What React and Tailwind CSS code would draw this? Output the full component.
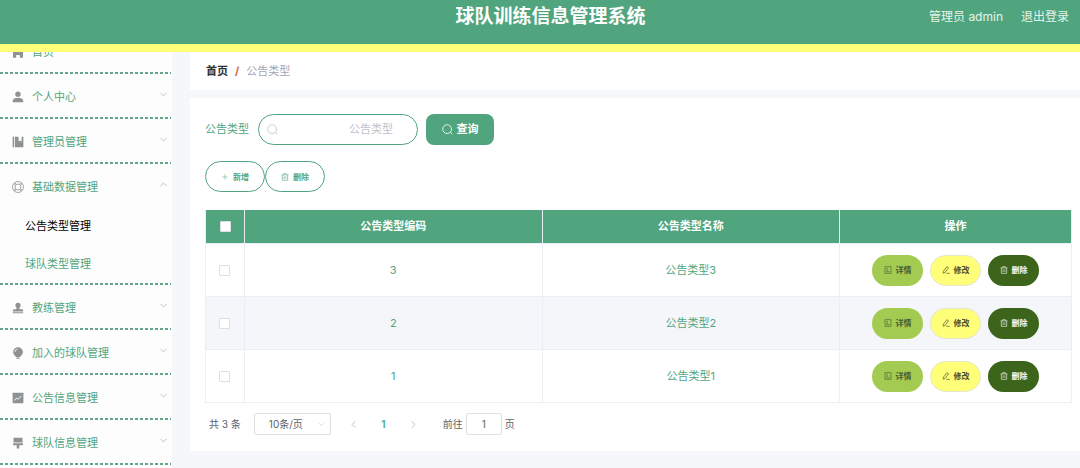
import { useState } from "react";
import { ChevronDown, ChevronLeft, ChevronRight, ChevronUp, Plus } from "lucide-react";

const HomeIcon = () => (
  <svg viewBox="0 0 12 12" className="size-3" fill="currentColor">
    <path d="M6 .6 11.600 5l-.5.8H11v6H7.800V9H4.200v2.800H1v-6H.9L.4 5z" />
  </svg>
);

const UserIcon = () => (
  <svg viewBox="0 0 12 12" className="size-3" fill="currentColor">
    <circle cx="6" cy="3.3" r="2.7" />
    <path d="M.6 11.2c0-2.8 1.6-4.2 3.6-4.2h3.6c2 0 3.6 1.4 3.6 4.200z" />
  </svg>
);

const ManagementIcon = () => (
  <svg viewBox="0 0 12 12" className="size-3" fill="currentColor">
    <path d="M.6.8h1.5v10.400H.6zM2.900.8h3.700v4.800l1.500-1.200 1.500 1.200V.8h1.800v10.400H2.900z" />
  </svg>
);

const HelpIcon = () => (
  <svg viewBox="0 0 12 12" className="size-3" fill="none" stroke="currentColor" strokeWidth=".8">
    <circle cx="6" cy="6" r="5.5" />
    <circle cx="6" cy="6" r="3" />
    <path d="m1.700 2.700 1.800 1.600M2.700 1.700l1.600 1.800M10.300 2.700 8.500 4.300M9.300 1.700 7.700 3.500M1.700 9.300l1.800-1.600M2.700 10.300l1.600-1.800M10.300 9.300 8.500 7.700M9.300 10.300 7.700 8.500" />
  </svg>
);

const StampIcon = () => (
  <svg viewBox="0 0 12 12" className="size-3" fill="currentColor">
    <path d="M6 .7a2.600 2.600 0 0 1 2.600 2.600c0 1.500-1.200 1.800-1.200 3.200 0 .6.4.8 1 .8h1.400c.8 0 1.400.6 1.400 1.400v.7H.8v-.7c0-.8.6-1.400 1.400-1.400h1.400c.6 0 1-.2 1-.8 0-1.400-1.200-1.700-1.200-3.200A2.600 2.600 0 0 1 6 .7zM.8 10.300h10.400v.9H.8z" />
  </svg>
);

const OpportunityIcon = () => (
  <svg viewBox="0 0 12 12" className="size-3" fill="currentColor">
    <path d="M6 .2a4.900 4.900 0 0 1 4.900 4.900c0 2.200-1.600 3.800-3.100 4.900H4.200C2.700 8.900 1.100 7.300 1.100 5.100A4.900 4.900 0 0 1 6 .2zM4.400 10.400h3.200v1.400H4.400z" />
    <path d="M2.900 5A3.100 3.100 0 0 1 5.500 2.100" fill="none" stroke="#fff" strokeWidth=".8" />
  </svg>
);

const MarketingIcon = () => (
  <svg viewBox="0 0 12 12" className="size-3" fill="currentColor">
    <rect x=".6" y=".8" width="10.8" height="10.4" rx=".4" />
    <path d="m2.400 8.500 2.200-2.400 1.700 1.200 2.900-3.400" fill="none" stroke="#fff" strokeWidth=".9" />
  </svg>
);

const PlatformIcon = () => (
  <svg viewBox="0 0 12 12" className="size-3" fill="currentColor">
    <path d="M1.500.8h9v4.800h-9zM1 6.200h10v1.200c0 .5-.4.8-.8.8H7.300v3.200H4.700V8.200H1.800c-.4 0-.8-.3-.8-.8z" />
  </svg>
);

const SearchIcon = () => (
  <svg viewBox="0 0 12 12" className="size-[11px] shrink-0" fill="none" stroke="currentColor" strokeWidth=".9">
    <circle cx="5.600" cy="5.600" r="4.800" />
    <path d="m9.100 9.100 2.100 2.100" />
  </svg>
);

const TrashIcon = () => (
  <svg viewBox="0 0 12 12" className="size-2" fill="none" stroke="currentColor" strokeWidth=".9">
    <path d="M.8 2.800h10.400M4 2.600V1h4v1.600M2 3v8h8V3M4.700 5v4M7.300 5v4" />
  </svg>
);

const DocumentIcon = () => (
  <svg viewBox="0 0 12 12" className="size-2" fill="none" stroke="currentColor" strokeWidth=".9">
    <path d="M1.500 1h9v10h-9zM3.500 4h2.500M3.500 6.200h2.500M3.500 8.500h5" />
  </svg>
);

const EditIcon = () => (
  <svg viewBox="0 0 12 12" className="size-2" fill="none" stroke="currentColor" strokeWidth="1">
    <path d="M7.400 1 9.800 2.700 4.600 9.800 1.700 10.800l.4-3zM6.500 11h5" />
  </svg>
);

const menus = [
  { name: "首页", icon: HomeIcon },
  { name: "个人中心", icon: UserIcon, arrow: true },
  { name: "管理员管理", icon: ManagementIcon, arrow: true },
  { name: "基础数据管理", icon: HelpIcon, arrow: true, children: ["公告类型管理", "球队类型管理"] },
  { name: "教练管理", icon: StampIcon, arrow: true },
  { name: "加入的球队管理", icon: OpportunityIcon, arrow: true },
  { name: "公告信息管理", icon: MarketingIcon, arrow: true },
  { name: "球队信息管理", icon: PlatformIcon, arrow: true },
];

const rows = [
  { code: 3, name: "公告类型3" },
  { code: 2, name: "公告类型2" },
  { code: 1, name: "公告类型1" },
];

function Header() {
  return (
    <header className="relative z-10 h-[52px] shrink-0 border-b-8 border-[#ffff7a] bg-[#50a57e] text-white">
      <div className="grid h-[34px] grid-cols-[1fr_auto_1fr] items-center pl-8 pr-[11px]">
        <h1 className="col-start-2 text-[19px] font-bold">球队训练信息管理系统</h1>
        <div className="flex items-center justify-end gap-[18px] text-xs text-[#e6f4ec]">
          <span>管理员 admin</span>
          <a href="#logout">退出登录</a>
        </div>
      </div>
    </header>
  );
}

function Sidebar() {
  const [opened, setOpened] = useState("基础数据管理");

  return (
    <aside className="w-[172px] shrink-0 overflow-hidden bg-[#fdfdfd]">
      {/* scrolled slightly under the header */}
      <nav className="-mt-[23px] w-[171px]">
        {menus.map(({ name, icon: Icon, arrow, children }) => {
          const isOpen = Boolean(children) && opened === name;
          return (
            <div key={name}>
              <button
                type="button"
                onClick={() => setOpened(isOpen ? "" : name)}
                className="flex h-[43px] w-full items-center pl-3 pr-[2px] pt-[2px] text-left text-[#50a57e]"
              >
                <span className="text-[#8f9295]">
                  <Icon />
                </span>
                <span className="ml-2 flex-1 pt-[2px]">{name}</span>
                {arrow && (isOpen
                  ? <ChevronUp size={11} strokeWidth={1.5} className="mb-1 text-[#a3a6aa]" />
                  : <ChevronDown size={11} strokeWidth={1.5} className="mb-1 text-[#a3a6aa]" />)}
              </button>
              {isOpen && children.map((child, i) => (
                <a
                  key={child}
                  href="#type"
                  className={`flex h-[38px] items-center pl-[25px] ${i === 0 ? "text-black" : "text-[#50a57e]"}`}
                >
                  {child}
                </a>
              ))}
              <div className="h-[2px] bg-[repeating-linear-gradient(to_right,#62a588_0_3px,transparent_3px_5px)]" />
            </div>
          );
        })}
      </nav>
    </aside>
  );
}

function SearchForm() {
  return (
    <form className="flex items-center" onSubmit={(e) => e.preventDefault()}>
      <label htmlFor="typeName" className="mr-[9px] text-[#50a57e]">公告类型</label>
      <div className="mr-2 flex h-[31px] w-40 items-center rounded-full border border-[#50a57e] pl-2 pr-6 text-[#c0c4cc]">
        <SearchIcon />
        <input
          id="typeName"
          placeholder="公告类型"
          className="w-full min-w-0 bg-transparent text-right text-[#50a57e] outline-none placeholder:text-[#bfc2c8]"
        />
      </div>
      <button type="submit" className="flex h-[31px] w-[68px] items-center justify-center gap-1 rounded-lg bg-[#50a57e] font-bold text-white">
        <SearchIcon />
        查询
      </button>
    </form>
  );
}

function TypeTable() {
  const [selected, setSelected] = useState([]);

  const toggle = (code) => {
    setSelected(selected.includes(code) ? selected.filter((c) => c !== code) : [...selected, code]);
  };

  const box = "block size-[11px] appearance-none rounded-[1px] border border-[#dcdfe6] bg-white checked:bg-[#50a57e]";
  const action = "flex h-[31px] w-[51px] items-center justify-center gap-1 rounded-full text-[8px] font-bold";

  return (
    <table className="mt-[18px] w-full table-fixed border-separate border-spacing-0 border-l border-[#ebeef5] text-center text-[#50a57e]">
      <colgroup>
        <col className="w-[39px]" />
        <col />
        <col />
        <col className="w-[232px]" />
      </colgroup>
      <thead>
        <tr className="h-[34px] bg-[#50a57e] text-white *:border-r *:border-b *:border-[#ebeef5]">
          <th>
            <input
              type="checkbox"
              aria-label="全选"
              checked={selected.length === rows.length}
              onChange={(e) => setSelected(e.target.checked ? rows.map((r) => r.code) : [])}
              className={`${box} mx-auto`}
            />
          </th>
          <th>公告类型编码</th>
          <th>公告类型名称</th>
          <th>操作</th>
        </tr>
      </thead>
      <tbody>
        {rows.map((row) => (
          <tr key={row.code} className="h-[53px] even:bg-[#f4f6fa] *:border-r *:border-b *:border-[#ebeef5]">
            <td className="pr-[2px]">
              <input
                type="checkbox"
                aria-label={row.name}
                checked={selected.includes(row.code)}
                onChange={() => toggle(row.code)}
                className={`${box} mx-auto`}
              />
            </td>
            <td>{row.code}</td>
            <td>{row.name}</td>
            <td>
              <div className="flex justify-center gap-[7px]">
                <button type="button" className={`${action} bg-[#a3cb52] text-[#3f5a35]`}><DocumentIcon />详情</button>
                <button type="button" className={`${action} border border-[#e4e7c8] bg-[#ffff7a] text-[#4b4b28]`}><EditIcon />修改</button>
                <button type="button" className={`${action} bg-[#3c641a] text-white`}><TrashIcon />删除</button>
              </div>
            </td>
          </tr>
        ))}
      </tbody>
    </table>
  );
}

function Pagination() {
  return (
    <div className="mt-[10px] flex h-[22px] items-center pl-1 text-[10px] text-[#606266]">
      <span>共 3 条</span>
      <div className="relative ml-[13px]">
        <select aria-label="每页条数" className="h-[22px] w-[77px] appearance-none rounded-xs border border-[#dcdfe6] bg-white pl-[14px] outline-none">
          <option>10条/页</option>
          <option>20条/页</option>
        </select>
        <ChevronDown size={9} strokeWidth={1.5} className="pointer-events-none absolute right-[5px] top-[7px] text-[#c0c4cc]" />
      </div>
      <div className="ml-[15px] flex items-center">
        <button type="button" aria-label="上一页" className="flex w-[15px] justify-center text-[#b4b7be]"><ChevronLeft size={11} strokeWidth={2} /></button>
        <button type="button" className="w-[45px] font-bold text-[#50b58a]">1</button>
        <button type="button" aria-label="下一页" className="flex w-[15px] justify-center text-[#b4b7be]"><ChevronRight size={11} strokeWidth={2} /></button>
      </div>
      <label htmlFor="page" className="ml-[22px]">前往</label>
      <input id="page" defaultValue="1" className="mx-[3px] h-[22px] w-9 rounded-xs border border-[#dcdfe6] text-center outline-none" />
      <span>页</span>
    </div>
  );
}

function App() {
  return (
    <div className="flex h-screen flex-col overflow-hidden bg-[#f6f7fa] font-['Inter','Noto_Sans_CJK_SC',sans-serif] text-[11px]">
      <Header />
      <div className="flex min-h-0 flex-1">
        <Sidebar />
        <main className="ml-[18px] min-w-0 flex-1">
          <div className="flex h-[38px] items-center gap-[7px] bg-white px-4">
            <a href="#home" className="font-bold text-[#303133]">首页</a>
            <span className="font-bold text-[#c8673c]">/</span>
            <span className="text-[#a0a5b5]">公告类型</span>
          </div>
          <section className="mt-2 bg-white pt-4 pr-2 pb-4 pl-[15px]">
            <SearchForm />
            <div className="mt-4 flex text-[8px] font-bold text-[#50a57e]">
              <button type="button" className="flex h-[31px] w-[60px] items-center justify-center gap-1 rounded-full border border-[#50a57e]">
                <Plus size={8} strokeWidth={1.5} />新增
              </button>
              <button type="button" className="flex h-[31px] w-[60px] items-center justify-center gap-1 rounded-full border border-[#50a57e]">
                <TrashIcon />删除
              </button>
            </div>
            <TypeTable />
            <Pagination />
          </section>
        </main>
      </div>
    </div>
  );
}

export default App;
